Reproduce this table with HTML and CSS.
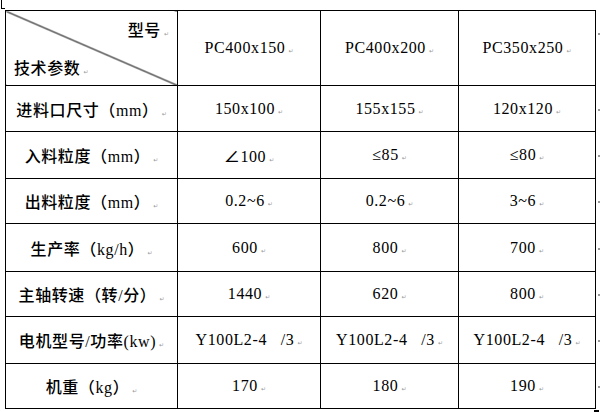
FILE: index.html
```html
<!DOCTYPE html>
<html lang="zh">
<head>
    <meta charset="UTF-8">
    <title>技术参数</title>
    <link rel="stylesheet" href="styles.css">
</head>
<body>

<div class="anchor"></div>

<table class="spec">
    <colgroup>
        <col class="c-label">
        <col class="c1">
        <col class="c2">
        <col class="c3">
    </colgroup>
    <tr class="r-head">
        <td class="diag">
            <div class="diag-top">型号<span class="mark">↵</span></div>
            <div class="diag-bottom">技术参数<span class="mark">↵</span></div>
        </td>
        <td>PC400x150<span class="mark">↵</span></td>
        <td>PC400x200<span class="mark">↵</span></td>
        <td>PC350x250<span class="mark">↵</span></td>
    </tr>
    <tr class="r1">
        <td>进料口尺寸（mm）<span class="mark">↵</span></td>
        <td>150x100<span class="mark">↵</span></td>
        <td>155x155<span class="mark">↵</span></td>
        <td>120x120<span class="mark">↵</span></td>
    </tr>
    <tr class="r2">
        <td>入料粒度（mm）<span class="mark">↵</span></td>
        <td>∠100<span class="mark">↵</span></td>
        <td>≤85<span class="mark">↵</span></td>
        <td>≤80<span class="mark">↵</span></td>
    </tr>
    <tr class="r3">
        <td>出料粒度（mm）<span class="mark">↵</span></td>
        <td>0.2~6<span class="mark">↵</span></td>
        <td>0.2~6<span class="mark">↵</span></td>
        <td>3~6<span class="mark">↵</span></td>
    </tr>
    <tr class="r4">
        <td>生产率（kg/h）<span class="mark">↵</span></td>
        <td>600<span class="mark">↵</span></td>
        <td>800<span class="mark">↵</span></td>
        <td>700<span class="mark">↵</span></td>
    </tr>
    <tr class="r5">
        <td>主轴转速（转/分）<span class="mark">↵</span></td>
        <td>1440<span class="mark">↵</span></td>
        <td>620<span class="mark">↵</span></td>
        <td>800<span class="mark">↵</span></td>
    </tr>
    <tr class="r6">
        <td>电机型号/功率(kw)<span class="mark">↵</span></td>
        <td>Y100L2-4&nbsp;&nbsp;&nbsp;/3<span class="mark">↵</span></td>
        <td>Y100L2-4&nbsp;&nbsp;&nbsp;/3<span class="mark">↵</span></td>
        <td>Y100L2-4&nbsp;&nbsp;&nbsp;/3<span class="mark">↵</span></td>
    </tr>
    <tr class="r7">
        <td>机重（kg）<span class="mark">↵</span></td>
        <td>170<span class="mark">↵</span></td>
        <td>180<span class="mark">↵</span></td>
        <td>190<span class="mark">↵</span></td>
    </tr>
</table>

<div class="handle"></div>

</body>
</html>
```

FILE: styles.css
```css
body {
    margin: 0;
    padding: 10px 0 0 5px;
    background: #fff;
    color: #000;
    font-family: "Liberation Serif", "Noto Sans CJK SC", serif;
    font-size: 16px;
    font-weight: 500;
    letter-spacing: 0.6px;
    position: relative;
}
.anchor {
    position: absolute;
    left: 1px;
    top: 0;
    width: 3px;
    height: 8px;
    border-left: 1px solid #000;
    border-bottom: 1px solid #000;
}
.spec {
    border-collapse: collapse;
    table-layout: fixed;
    width: 591px;
}
.c-label { width: 172px; }
.c1 { width: 143px; }
.c2 { width: 138px; }
.c3 { width: 137px; }
.spec td {
    border: 1px solid #000;
    padding: 0;
    text-align: center;
    vertical-align: middle;
    white-space: nowrap;
    position: relative;
}
.spec td:last-child::after {
    content: "";
    position: absolute;
    right: -5px;
    top: 50%;
    width: 2px;
    height: 2px;
    background: #999;
}
.r-head { height: 75px; }
.r1 { height: 46px; }
.r2 { height: 47px; }
.r3 { height: 45px; }
.r4 { height: 48px; }
.r5 { height: 45px; }
.r6 { height: 47px; }
.r7 { height: 45px; }
.r-head td:last-child::after {
    top: 22px;
}
.diag {
    background: linear-gradient(to top right, transparent calc(50% - 1px), #000 50%, transparent calc(50% + 1px));
}
.diag-top {
    text-align: right;
    padding: 0 8px 14px 0;
}
.diag-bottom {
    text-align: left;
    padding-left: 8px;
}
.mark {
    font-family: "DejaVu Sans", sans-serif;
    font-size: 6px;
    color: #999;
    margin-left: 3px;
    letter-spacing: 0;
}
.handle {
    width: 5px;
    height: 3px;
    background: #000;
    margin-left: 589px;
    margin-top: 1px;
}
```
